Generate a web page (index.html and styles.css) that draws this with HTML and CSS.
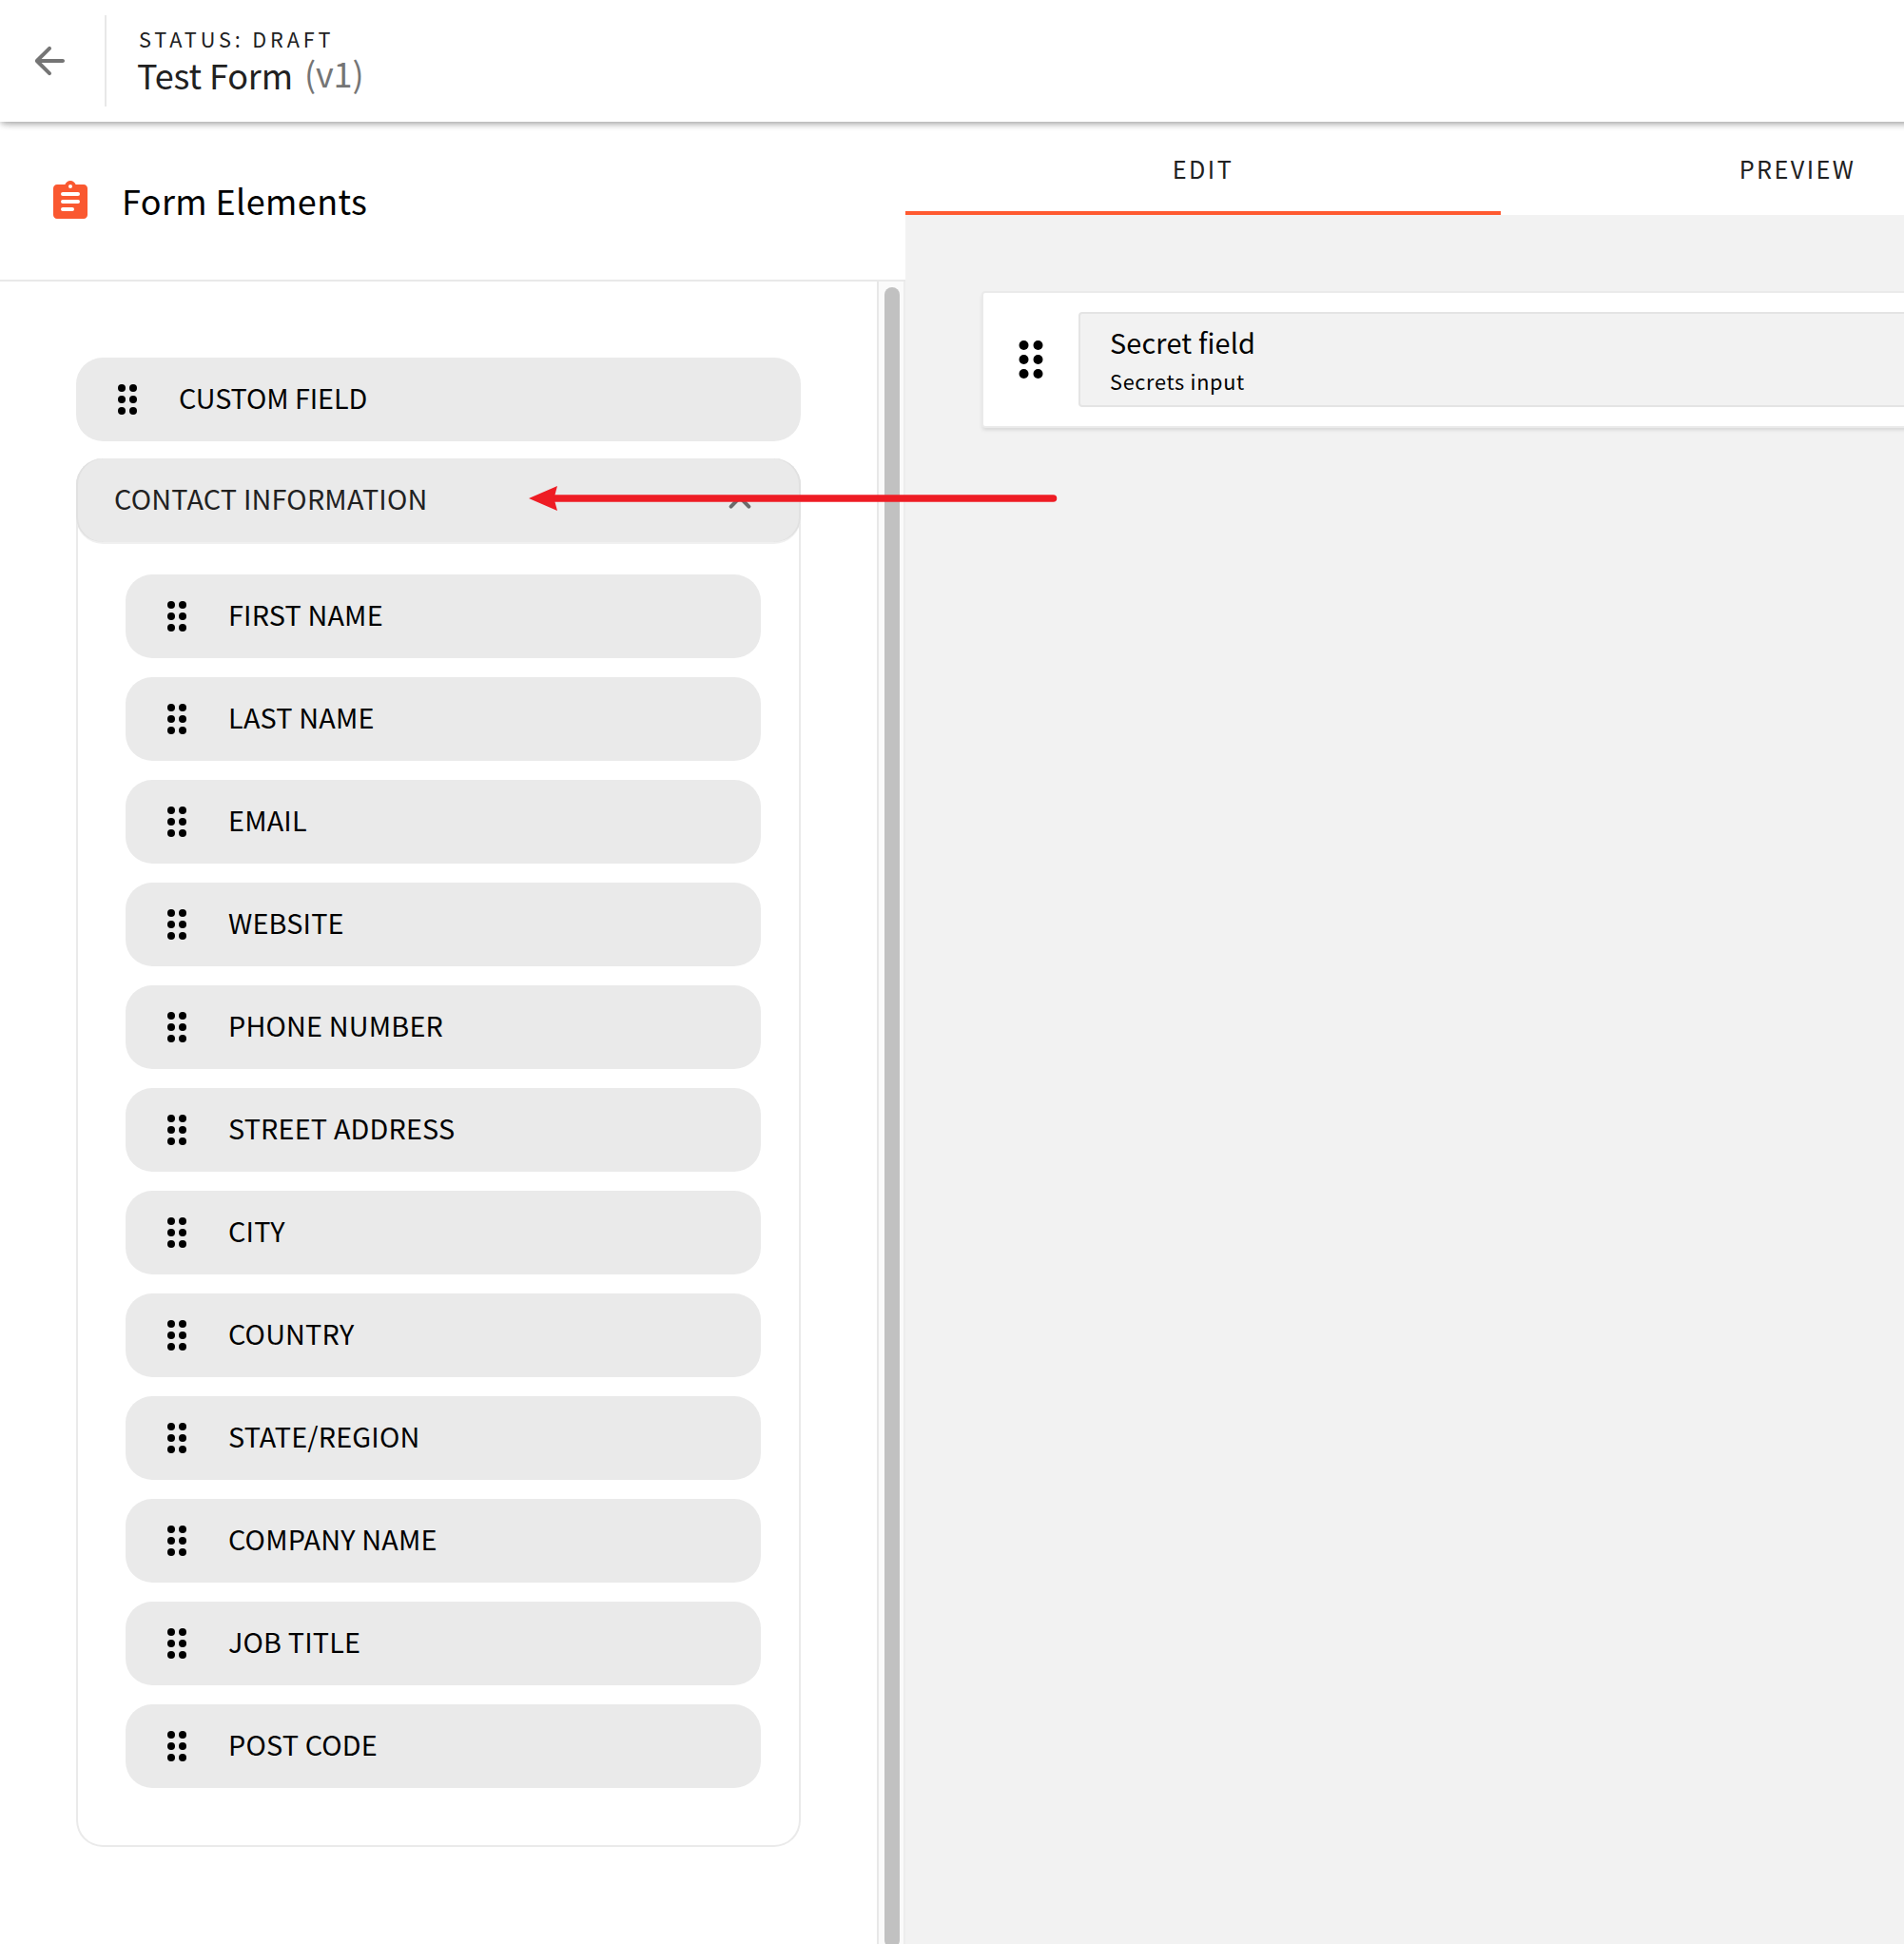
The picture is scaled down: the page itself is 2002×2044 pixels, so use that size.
FILE: index.html
```html
<!DOCTYPE html>
<html lang="en">
<head>
<meta charset="utf-8">
<title>Test Form</title>
<link rel="stylesheet" href="styles.css">
</head>
<body>
<svg class="symbols" width="0" height="0" aria-hidden="true">
  <symbol id="drag" viewBox="0 0 24 24">
    <circle cx="9" cy="6" r="2"/><circle cx="15" cy="6" r="2"/>
    <circle cx="9" cy="12" r="2"/><circle cx="15" cy="12" r="2"/>
    <circle cx="9" cy="18" r="2"/><circle cx="15" cy="18" r="2"/>
  </symbol>
</svg>
<div class="app">
  <header class="topbar">
    <button class="back" aria-label="Back">
      <svg class="icon" viewBox="0 0 24 24"><path d="M19 11H7.83l4.88-4.88c.39-.39.39-1.03 0-1.42-.39-.39-1.02-.39-1.41 0l-6.59 6.59c-.39.39-.39 1.02 0 1.41l6.59 6.59c.39.39 1.02.39 1.41 0 .39-.39.39-1.02 0-1.41L7.83 13H19c.55 0 1-.45 1-1s-.45-1-1-1z"/></svg>
    </button>
    <div class="titles">
      <div class="status">STATUS: DRAFT</div>
      <h1 class="title"><span>Test Form</span><span class="version">(v1)</span></h1>
    </div>
  </header>
  <div class="body">
    <aside class="sidebar">
      <div class="side-head">
        <svg class="icon clip" viewBox="0 0 24 24">
          <path fill-rule="evenodd" d="M19 3h-4.180C14.400 1.840 13.300 1 12 1s-2.400.84-2.820 2H5c-1.100 0-2 .9-2 2v14c0 1.100.9 2 2 2h14c1.100 0 2-.9 2-2V5c0-1.100-.9-2-2-2zM12 3a1 1 0 1 1 0 2 1 1 0 0 1 0-2z"/>
          <path class="lines" d="M8 8h8M8 12h8M8 16h5"/>
        </svg>
        <h2>Form Elements</h2>
      </div>
      <div class="side-scroll">
        <div class="side-content">
          <div class="field custom"><svg class="icon"><use href="#drag"/></svg><span>CUSTOM FIELD</span></div>
          <section class="group">
            <div class="group-head"><span>CONTACT INFORMATION</span>
              <svg class="icon chevron" viewBox="0 0 24 24"><path d="M7.300 14.300l4.700-4.700 4.700 4.700"/></svg>
            </div>
            <div class="group-list">
              <div class="field"><svg class="icon"><use href="#drag"/></svg><span>FIRST NAME</span></div>
              <div class="field"><svg class="icon"><use href="#drag"/></svg><span>LAST NAME</span></div>
              <div class="field"><svg class="icon"><use href="#drag"/></svg><span>EMAIL</span></div>
              <div class="field"><svg class="icon"><use href="#drag"/></svg><span>WEBSITE</span></div>
              <div class="field"><svg class="icon"><use href="#drag"/></svg><span>PHONE NUMBER</span></div>
              <div class="field"><svg class="icon"><use href="#drag"/></svg><span>STREET ADDRESS</span></div>
              <div class="field"><svg class="icon"><use href="#drag"/></svg><span>CITY</span></div>
              <div class="field"><svg class="icon"><use href="#drag"/></svg><span>COUNTRY</span></div>
              <div class="field"><svg class="icon"><use href="#drag"/></svg><span>STATE/REGION</span></div>
              <div class="field"><svg class="icon"><use href="#drag"/></svg><span>COMPANY NAME</span></div>
              <div class="field"><svg class="icon"><use href="#drag"/></svg><span>JOB TITLE</span></div>
              <div class="field"><svg class="icon"><use href="#drag"/></svg><span>POST CODE</span></div>
            </div>
          </section>
        </div>
        <div class="track"><div class="thumb"></div></div>
      </div>
    </aside>
    <main class="main">
      <nav class="tabs"><div class="tab active">EDIT</div><div class="tab">PREVIEW</div></nav>
      <div class="canvas">
        <div class="card">
          <svg class="icon big"><use href="#drag"/></svg>
          <div class="secret">
            <div class="name">Secret field</div>
            <div class="hint">Secrets input</div>
          </div>
        </div>
      </div>
    </main>
  </div>
  <svg class="arrow" viewBox="0 0 556 28"><path class="shaft" d="M24 14H551.500"/><path class="head" d="M0 14L30 1L26.500 14L30 27Z"/></svg>
</div>
</body>
</html>
```
FILE: styles.css
```css
* { box-sizing: border-box; }
body { margin: 0; background: #fff; color: #000; font-family: "Noto Sans CJK SC", "Noto Sans", sans-serif; font-size: 28.8px; }
h1, h2 { margin: 0; font-weight: 400; }
.symbols { position: absolute; }
.app { position: relative; width: 2002px; height: 2044px; overflow: hidden; display: flex; flex-direction: column; }
.icon { width: 48px; height: 48px; flex: none; display: block; }

.topbar { width: 2204px; height: 128px; flex: none; display: flex; align-items: flex-start; padding-top: 16px; background: #fff; z-index: 1; box-shadow: 0 4px 8px -2px rgba(0,0,0,.2), 0 8px 10px -6px rgba(0,0,0,.06), 0 2px 6px rgba(0,0,0,.17); }
.back { width: 112px; height: 96px; padding: 0 0 0 28px; border: 0; border-right: 2px solid #e8e8e8; background: none; fill: #757575; }
.titles { padding: 10px 0 0 32px; color: #212121; }
.status { margin-left: 2px; font-size: 21.7px; line-height: 30px; letter-spacing: 3.85px; }
.title { display: flex; gap: 12px; font-size: 36px; line-height: 44px; letter-spacing: -.12px; }
.version { color: #757575; margin-top: -2px; }

.body { flex: 1; min-height: 0; display: flex; }
.sidebar { width: 952px; flex: none; display: flex; flex-direction: column; }
.side-head { height: 168px; flex: none; display: flex; align-items: center; gap: 30px; padding: 0 0 0 50px; border-bottom: 2px solid #e9e9e9; }
.side-head h2 { margin-bottom: 2px; font-size: 36px; line-height: 48px; letter-spacing: .4px; }
.clip { fill: #fa5830; margin-bottom: -2px; }
.lines { fill: none; stroke: #fff; stroke-width: 2; stroke-linecap: round; }
.side-scroll { flex: 1; min-height: 0; display: flex; }
.side-content { flex: 1; padding: 80px 80px 0; display: flex; flex-direction: column; gap: 18px; }
.field { height: 88px; flex: none; display: flex; align-items: center; gap: 30px; padding-left: 30px; border-radius: 28px; background: #eaeaea; letter-spacing: .17px; }
.field span, .group-head span { padding-bottom: 5px; line-height: 40px; }
.field.custom { letter-spacing: -.1px; }
.group { height: 1460px; border: 2px solid #eaeaea; border-top: 0; border-radius: 28px; }
.group-head { height: 90px; margin: 0 -2px; padding: 0 40px; display: flex; align-items: center; justify-content: space-between; border-radius: 28px; border-bottom: 2px solid #f0f0f0; background: #eaeaea; color: #212121; letter-spacing: .2px; box-shadow: inset 2px 0 0 #e1e1e1, inset -2px 0 0 #e1e1e1; }
.chevron { margin-top: 3px; fill: none; stroke: #6b6b6b; stroke-width: 2; stroke-linecap: round; stroke-linejoin: round; }
.group-list { padding: 32px 40px 0 50px; display: flex; flex-direction: column; gap: 20px; }
.track { width: 30px; flex: none; border: 2px solid #e8e8e8; border-width: 0 2px; border-right-color: #ededed; background: #fafafa; padding: 6px 4px 0 6px; }
.thumb { height: 1746px; border-radius: 8px; background: #c1c1c1; }

.main { flex: 1; min-width: 0; display: flex; flex-direction: column; background: #f2f2f2; }
.tabs { display: flex; height: 98px; flex: none; background: #fff; }
.tab { width: 626px; flex: none; padding: 29px 2px 0 0; text-align: center; font-size: 25.2px; line-height: 40px; letter-spacing: 2.45px; color: #212121; }
.tab.active { padding-right: 0; border-bottom: 4px solid #ff5a30; }
.canvas { padding: 80px 0 0 80px; }
.card { width: 1100px; height: 144px; border: 2px solid #eaeaea; border-radius: 4px; background: #fff; box-shadow: 0 3px 4px -1px rgba(0,0,0,.12); display: flex; align-items: center; padding-left: 20px; gap: 20px; }
.big { width: 60px; height: 60px; }
.secret { flex: 1; height: 100px; border: 2px solid #e4e4e4; border-radius: 4px; background: #f2f2f2; padding: 9px 0 0 31px; }
.name { line-height: 42px; letter-spacing: .19px; }
.hint { font-size: 21.7px; line-height: 40px; letter-spacing: .7px; }

/* callout pointing at the open group */
.arrow { position: absolute; left: 556px; top: 510px; width: 556px; height: 28px; z-index: 2; }
.shaft { stroke: #ee1c24; stroke-width: 7.5; stroke-linecap: round; }
.head { fill: #ee1c24; }
```
